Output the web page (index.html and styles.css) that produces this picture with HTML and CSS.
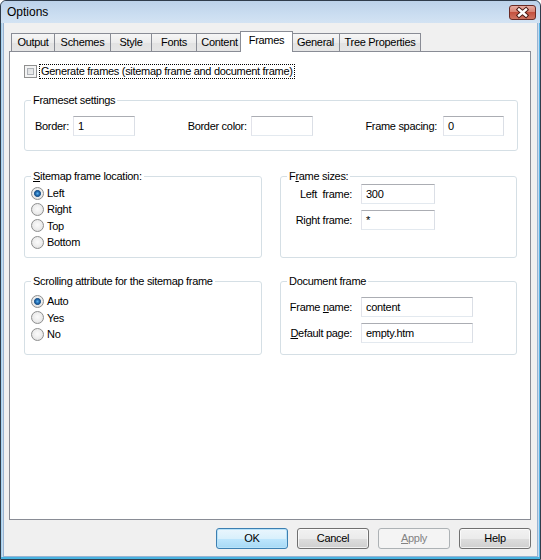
FILE: index.html
```html
<!DOCTYPE html>
<html>
<head>
<meta charset="utf-8">
<title>Options</title>
<link rel="stylesheet" href="styles.css">
</head>
<body>
<div class="window">
  <div class="titlebar">
    <span class="title">Options</span>
    <div class="close">
      <svg width="25" height="13" viewBox="0 0 25 13">
        <path d="M9 3.5 L16 9.5 M16 3.5 L9 9.5" stroke="#4a1a14" stroke-width="4.4" stroke-linecap="square" fill="none"/>
        <path d="M9 3.5 L16 9.5 M16 3.5 L9 9.5" stroke="#ffffff" stroke-width="2.4" stroke-linecap="square" fill="none"/>
      </svg>
    </div>
  </div>
  <div class="client">
    <div class="tabs">
      <div class="tab">Output</div>
      <div class="tab">Schemes</div>
      <div class="tab">Style</div>
      <div class="tab">Fonts</div>
      <div class="tab">Content</div>
      <div class="tab active">Frames</div>
      <div class="tab">General</div>
      <div class="tab">Tree Properties</div>
    </div>
    <div class="panel">
      <div class="check-row">
        <span class="checkbox"></span>
        <span class="focus">Generate frames (sitemap frame and document frame)</span>
      </div>

      <fieldset class="group frameset">
        <legend>Frameset settings</legend>
        <div class="fs-row">
          <div class="field"><span>Border:</span><span class="input w62">1</span></div>
          <div class="field"><span>Border color:</span><span class="input w62"></span></div>
          <div class="field"><span>Frame spacing:</span><span class="input w61 gap6">0</span></div>
        </div>
      </fieldset>

      <div class="cols cols-first">
        <fieldset class="group radios first-radios">
          <legend><u>S</u>itemap frame location:</legend>
          <div class="radio-row"><span class="radio on"></span><span>Left</span></div>
          <div class="radio-row"><span class="radio"></span><span>Right</span></div>
          <div class="radio-row"><span class="radio"></span><span>Top</span></div>
          <div class="radio-row"><span class="radio"></span><span>Bottom</span></div>
        </fieldset>
        <fieldset class="group sizes">
          <legend>F<u>r</u>ame sizes:</legend>
          <div class="form-grid">
            <span class="lbl">Left&nbsp; frame:</span><span class="input w74">300</span>
            <span class="lbl">Right frame:</span><span class="input w74">*</span>
          </div>
        </fieldset>
      </div>

      <div class="cols cols-second">
        <fieldset class="group radios second-radios">
          <legend>Scrolling attribute for the sitemap frame</legend>
          <div class="radio-row"><span class="radio on"></span><span>Auto</span></div>
          <div class="radio-row"><span class="radio"></span><span>Yes</span></div>
          <div class="radio-row"><span class="radio"></span><span>No</span></div>
        </fieldset>
        <fieldset class="group docframe">
          <legend>Document frame</legend>
          <div class="form-grid">
            <span class="lbl">Frame <u>n</u>ame:</span><span class="input w112">content</span>
            <span class="lbl"><u>D</u>efault page:</span><span class="input w112">empty.htm</span>
          </div>
        </fieldset>
      </div>
    </div>
    <div class="buttons">
      <div class="btn default">OK</div>
      <div class="btn">Cancel</div>
      <div class="btn disabled"><u>A</u>pply</div>
      <div class="btn">Help</div>
    </div>
  </div>
</div>
</body>
</html>
```
FILE: styles.css
```css
* { box-sizing: border-box; }
html, body { margin: 0; padding: 0; }
body {
  font-family: "Liberation Sans", Arial, sans-serif;
  font-size: 11px;
  letter-spacing: -0.3px;
  color: #000;
  background: #fff;
}

.window {
  width: 541px;
  height: 560px;
  border: 1px solid #2f3c4b;
  border-radius: 6px 6px 0 0;
  background: #c6daef;
  box-shadow: inset 0 -2px #48b3e1, inset 1px 0 #a6d2ee, inset -1px 0 #58b4e4;
  padding: 0 2px 2px;
  display: flex;
  flex-direction: column;
  overflow: hidden;
}

.titlebar {
  height: 22px;
  margin: 0 -2px;
  padding-left: 6px;
  display: flex;
  align-items: center;
  background: linear-gradient(#bcd2ea, #c9dcf0 55%, #d3e3f3);
  border-radius: 5px 5px 0 0;
  flex: none;
}
.title { font-size: 12px; letter-spacing: 0; color: #000; }
.close {
  margin-left: auto;
  margin-right: 4px;
  align-self: flex-start;
  margin-top: 4px;
  width: 27px;
  height: 15px;
  border: 1px solid #6a2a24;
  border-radius: 3px;
  background: linear-gradient(#e6aca2 0%, #d98373 45%, #c4513f 50%, #cf7361 100%);
  display: flex;
  align-items: center;
  justify-content: center;
}
.close svg { display: block; }

.client {
  flex: 1;
  background: #f0f0f0;
  border: 1px solid #98b4d2;
  border-top: none;
  padding: 8px 6px 0 5px;
  display: flex;
  flex-direction: column;
}

.tabs {
  height: 20px;
  display: flex;
  align-items: flex-end;
  padding-left: 2px;
  position: relative;
  z-index: 1;
  flex: none;
}
.tab {
  height: 18px;
  line-height: 17px;
  text-align: center;
  border: 1px solid #898c95;
  border-bottom: none;
  margin-right: -1px;
  background: linear-gradient(#f6f6f6, #ececec 50%, #e2e2e2 51%, #e6e6e6);
  white-space: nowrap;
}
.tab:nth-child(1) { width: 44px; }
.tab:nth-child(2) { width: 57px; }
.tab:nth-child(3) { width: 42px; }
.tab:nth-child(4) { width: 46px; }
.tab:nth-child(5) { width: 47px; }
.tab:nth-child(7) { width: 49px; }
.tab:nth-child(8) { width: 82px; }
.tab.active {
  width: 53px;
  height: 21px;
  line-height: 17px;
  margin: 0 -2px -1px -2px;
  background: #fff;
  position: relative;
  z-index: 2;
}

.panel {
  height: 469px;
  flex: none;
  background: #fff;
  border: 1px solid #898c95;
  padding: 12px 12px 0 14px;
}

.check-row {
  height: 15px;
  display: flex;
  align-items: center;
}
.checkbox {
  width: 13px;
  height: 13px;
  flex: none;
  border: 1px solid #8f8f8f;
  background: linear-gradient(135deg, #d4d6d9, #f7f7f7);
  box-shadow: inset 0 0 0 2px #f4f4f4, inset 0 0 0 3px #aeb2b8;
}
.focus {
  margin-left: 2px;
  height: 15px;
  line-height: 13px;
  padding: 0 1px;
  border: 1px dotted #000;
}

.group {
  margin: 0;
  padding: 0;
  border: 1px solid #d5dfe5;
  border-radius: 3px;
  min-width: 0;
}
.group legend {
  margin-left: 6px;
  padding: 0 2px;
  line-height: 13px;
  height: 13px;
}

.frameset {
  margin-top: 15px;
  padding: 9px 0 14px 0;
}
.fs-row {
  display: flex;
  justify-content: space-between;
  align-items: center;
  padding: 0 13px 0 10px;
}
.field {
  display: flex;
  align-items: center;
  gap: 4px;
}
.field .gap6 { margin-left: 2px; }

.input {
  display: block;
  height: 20px;
  line-height: 18px;
  padding-left: 4px;
  border: 1px solid;
  border-color: #abadb3 #dbdfe6 #e3e9ef #e2e3ea;
  background: #fff;
  white-space: nowrap;
}
.w62 { width: 62px; }
.w61 { width: 61px; }
.w74 { width: 74px; }
.w112 { width: 112px; }

.cols {
  display: grid;
  grid-template-columns: 238px 237px;
  column-gap: 18px;
}
.cols-first { margin-top: 19px; }
.cols-second { margin-top: 17px; }

.radio-row {
  height: 16.33px;
  display: flex;
  align-items: center;
  gap: 3px;
  padding-left: 6px;
}
.first-radios { padding: 2px 0 7px 0; }
.second-radios { padding: 5px 0 12px 0; }

.radio {
  width: 13px;
  height: 13px;
  flex: none;
  border-radius: 50%;
  border: 1px solid #8e8f8f;
  background: radial-gradient(circle at 50% 45%, #fbfbfb 0, #ececec 55%, #d3d3d3 100%);
}
.radio.on {
  background:
    radial-gradient(circle at 50% 50%, #5fb3ea 0, #2a78be 1.6px, #16508c 2.7px, #3d6e9c 3.3px, rgba(255,255,255,0) 3.8px),
    radial-gradient(circle at 50% 45%, #fbfbfb 0, #ececec 55%, #d3d3d3 100%);
}

.form-grid {
  display: grid;
  grid-template-columns: 71px auto;
  column-gap: 9px;
  row-gap: 6px;
  align-items: center;
  justify-content: start;
}
.lbl { text-align: right; white-space: nowrap; }
.sizes { padding: 1px 0 0 0; }
.docframe { padding: 9px 0 0 0; }

.buttons {
  margin-top: 8px;
  display: flex;
  justify-content: flex-end;
  gap: 9px;
}
.btn {
  width: 72px;
  height: 21px;
  line-height: 19px;
  text-align: center;
  border: 1px solid #707070;
  border-radius: 3px;
  background: linear-gradient(#f2f2f2 0%, #ebebeb 50%, #dddddd 51%, #cfcfcf 100%);
  box-shadow: inset 0 0 0 1px rgba(255,255,255,0.7);
}
.btn.default {
  border-color: #3c7fb1;
  background: linear-gradient(#eaf6fd 0%, #d9f0fc 50%, #bee6fd 51%, #a7d9f5 100%);
  box-shadow: inset 0 0 0 1px #b8e2f9;
}
.btn.disabled {
  border-color: #adb2b5;
  background: #f4f4f4;
  color: #838383;
  box-shadow: none;
}
```
